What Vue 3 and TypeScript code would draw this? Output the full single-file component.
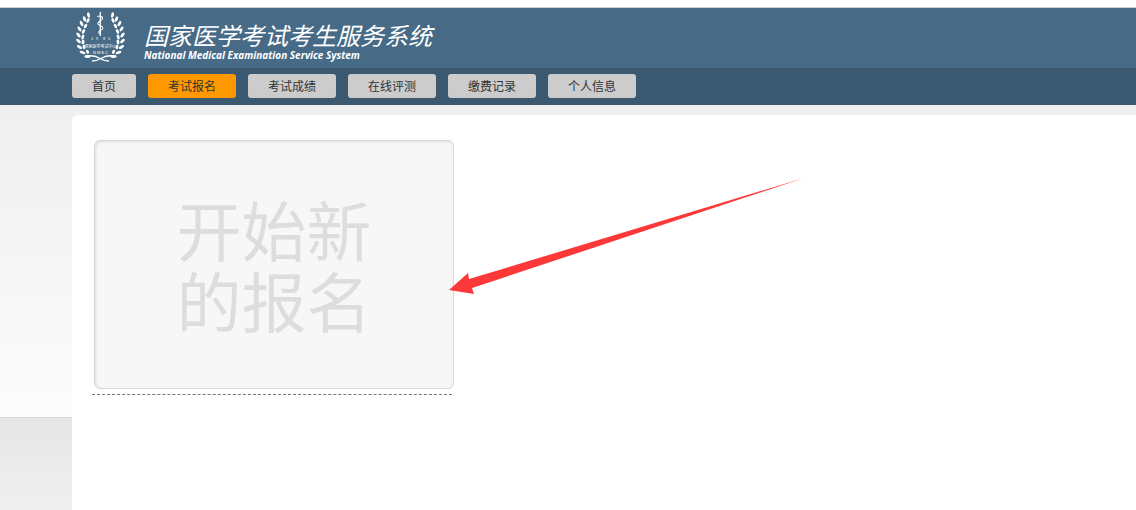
<script setup lang="ts">
import { ref } from 'vue'

interface Leaf {
  x: number
  y: number
  angle: number
  size: number
}

const tabs: string[] = ['首页', '考试报名', '考试成绩', '在线评测', '缴费记录', '个人信息']
const active = ref('考试报名')

// Leaves of the left laurel branch, from the top down; the right branch is mirrored.
const leaves: Leaf[] = [
  { x: 16.5, y: 7, angle: 78, size: 2.8 },
  { x: 12.5, y: 11, angle: 68, size: 2.8 },
  { x: 16, y: 12.5, angle: 115, size: 2.5 },
  { x: 9.5, y: 15.5, angle: 62, size: 2.9 },
  { x: 13.5, y: 18, angle: 118, size: 2.5 },
  { x: 7.5, y: 21, angle: 56, size: 2.9 },
  { x: 11.5, y: 23.5, angle: 116, size: 2.5 },
  { x: 6.5, y: 27, angle: 50, size: 2.9 },
  { x: 10.8, y: 29, angle: 108, size: 2.5 },
  { x: 6.5, y: 33, angle: 42, size: 2.9 },
  { x: 11, y: 34, angle: 98, size: 2.4 },
  { x: 7.5, y: 39, angle: 32, size: 3 },
  { x: 12, y: 39, angle: 86, size: 2.2 },
  { x: 10.5, y: 44.5, angle: 18, size: 3 },
  { x: 15.5, y: 43.8, angle: 68, size: 2.2 },
  { x: 15.5, y: 48.5, angle: 2, size: 3.2 },
]
</script>

<template>
  <div class="page">
    <header class="banner">
      <svg class="emblem" viewBox="0 0 60 60" role="img" aria-label="国家医学考试中心">
        <defs>
          <g id="branch">
            <ellipse
              v-for="(leaf, i) in leaves"
              :key="i"
              :rx="leaf.size"
              ry="1.4"
              :transform="`translate(${leaf.x} ${leaf.y}) rotate(${leaf.angle})`"
            />
            <path d="M15 48Q22 47 27 50T37 53" fill="none" stroke="#fff" stroke-width="1.4" />
          </g>
        </defs>
        <g fill="#fff">
          <use href="#branch" />
          <use href="#branch" transform="translate(57 0) scale(-1 1)" />
        </g>
        <path d="M28.3 4V28" stroke="#fff" stroke-width="1.3" fill="none" />
        <path
          d="M25.5 9Q27 7 30 9C33 12 25 13 26 16C27 18 32 18 30.5 21C29 23 26 22 27 25L29 26"
          stroke="#fff"
          stroke-width="1.1"
          fill="none"
        />
        <g fill="#fff" text-anchor="middle">
          <text x="20" y="31.5" class="tiny">1</text>
          <text x="25" y="31.5" class="tiny">9</text>
          <text x="32" y="31.5" class="tiny">8</text>
          <text x="37" y="31.5" class="tiny">5</text>
          <text x="28.5" y="40" class="tiny">国家医学考试中心</text>
          <text x="28.5" y="45.5" class="tiny">N M E C</text>
        </g>
      </svg>
      <div class="titles">
        <h1>国家医学考试考生服务系统</h1>
        <p>National Medical Examination Service System</p>
      </div>
    </header>

    <nav class="tabs">
      <button
        v-for="tab in tabs"
        :key="tab"
        type="button"
        :class="{ active: tab === active }"
        @click="active = tab"
      >{{ tab }}</button>
    </nav>

    <div class="backdrop">
      <main class="panel">
        <div class="entry">
          <button type="button" class="start">开始新<br />的报名</button>
          <svg class="arrow" viewBox="0 0 356 118" aria-hidden="true">
            <path d="M0 112L19 95L20 101L355 0L23 110L25 116Z" fill="#fc3838" />
          </svg>
        </div>
      </main>
    </div>
  </div>
</template>

<style>
body {
  margin: 0;
}
</style>

<style scoped>
.page {
  display: flex;
  flex-direction: column;
  box-sizing: border-box;
  min-height: 100vh;
  border-top: 7px solid #fff;
  overflow: hidden;
  font-family: "Liberation Sans", "Noto Sans CJK SC", sans-serif;
}

.banner {
  display: flex;
  height: 60px;
  padding-left: 72px;
  border-top: 1px solid #ccd3da;
  background: #476b87;
  color: #fff;
}

.emblem {
  width: 60px;
  height: 60px;
}

.tiny {
  font: 4px "Liberation Sans", "Noto Sans CJK SC", sans-serif;
}

.titles {
  padding: 13px 0 0 12px;
  white-space: nowrap;
}

h1 {
  margin: 0;
  font: italic 400 24px/28px "Noto Sans CJK SC", sans-serif;
}

p {
  margin: 0;
  font: italic 700 10px/12px "Open Sans", sans-serif;
}

.tabs {
  display: flex;
  gap: 12px;
  padding: 6px 0 7px 72px;
  background: #3b5a72;
}

.tabs button {
  height: 24px;
  padding: 0 20px;
  border: 0;
  border-radius: 3px;
  background: #ccc;
  color: #333;
  font: 12px/24px "Noto Sans CJK SC", sans-serif;
  cursor: pointer;
}

.tabs .active {
  background: #f90;
}

.backdrop {
  display: flex;
  flex: 1;
  padding: 10px 0 0 72px;
  background:
    linear-gradient(#efefef, #fcfcfc) 0 0 / 100% 312px no-repeat,
    linear-gradient(#d9d9d9, #d9d9d9) 0 312px / 100% 1px no-repeat,
    linear-gradient(#e6e6e6 312px, #f0f0f0 412px);
}

.panel {
  flex: 1;
  padding: 25px 20px;
  border-radius: 6px 0 0 0;
  background: #fff;
}

.entry {
  position: relative;
  width: 360px;
  padding-bottom: 5px;
  border-bottom: 1px dashed #777;
}

.start {
  display: block;
  width: 100%;
  height: 249px;
  margin-left: 2px;
  padding: 0 0 2px;
  border: 1px solid #d8d8d8;
  border-radius: 6px;
  background: #f7f7f7;
  box-shadow: inset 1px 1px 3px #ddd;
  color: #ddd;
  font: 65px/71px "Noto Sans CJK SC", sans-serif;
  cursor: pointer;
}

.arrow {
  position: absolute;
  left: 357px;
  top: 38px;
  width: 356px;
  height: 118px;
  pointer-events: none;
}
</style>
